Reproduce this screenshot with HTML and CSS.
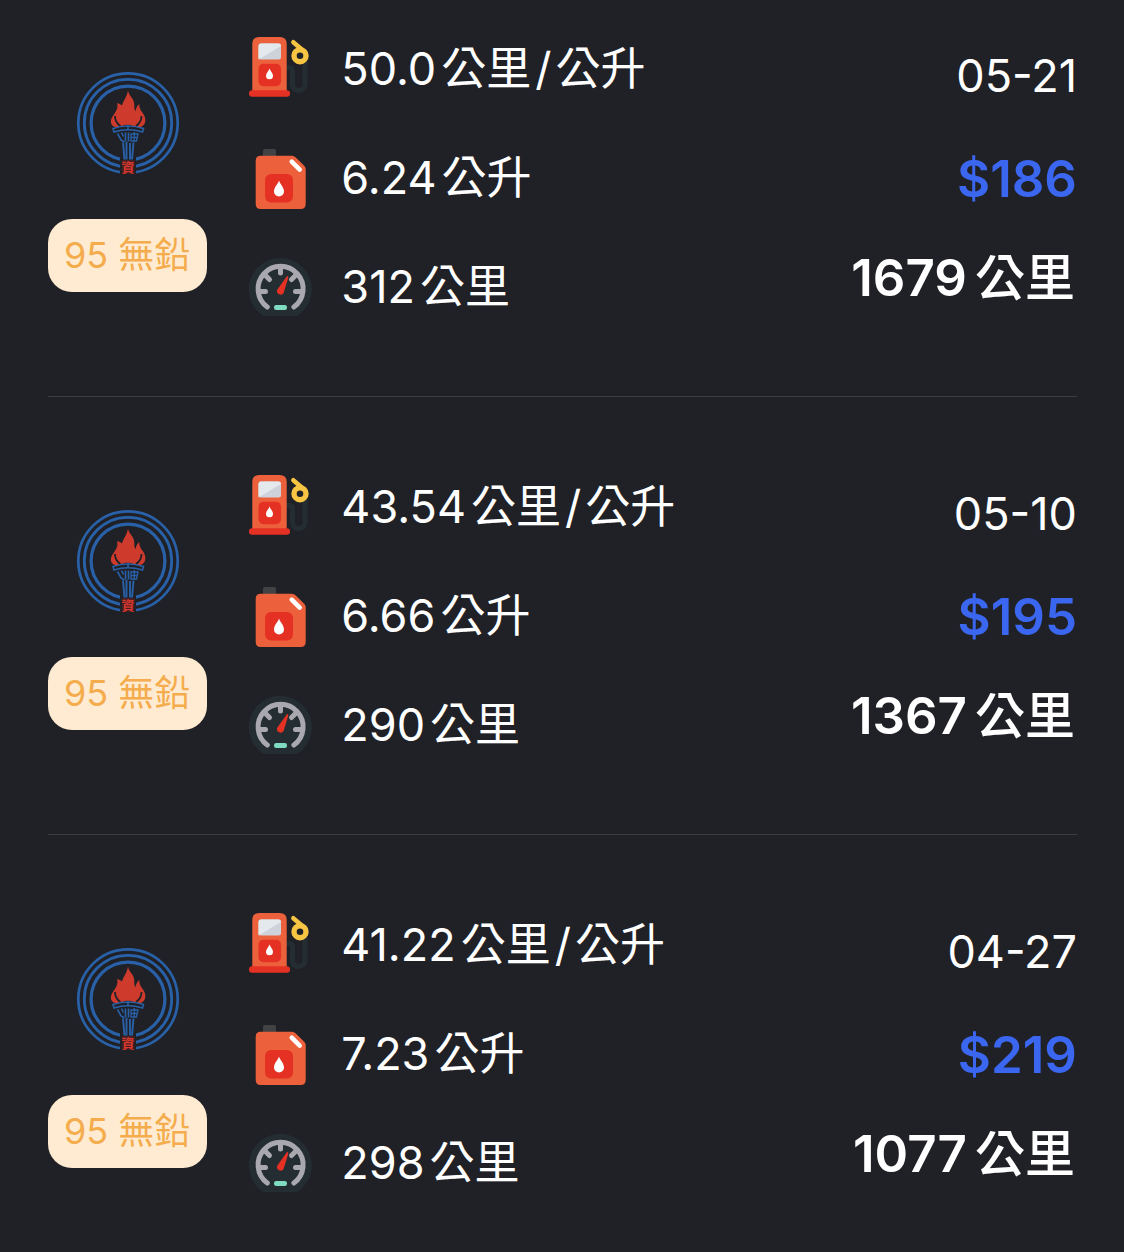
FILE: index.html
```html
<!DOCTYPE html>
<html lang="zh-Hant">
<head>
  <meta charset="UTF-8" />
  <meta name="viewport" content="width=device-width, initial-scale=1.0" />
  <title>加油紀錄</title>
  <link rel="stylesheet" href="styles.css">
</head>
<body>
  <!-- shared icons -->
  <svg class="sprite" aria-hidden="true">
    <symbol id="logo" viewBox="0 0 104 104">
      <g fill="none" stroke="#2961a8">
        <circle cx="52" cy="52" r="49.7" stroke-width="2.7" />
        <circle cx="52" cy="52" r="43.7" stroke-width="2.8" />
        <circle cx="52" cy="52" r="36.9" stroke-width="3.2" />
      </g>
      <path d="M44 84h16v20H44z" fill="#202126" />
      <path d="M52 19.500c-1 6.500-4.500 9.500-6 15-1.200-1.200-3-2-5-2.500 1.500 5-1 8.500-3.500 12-3.500 4.500-3.500 9.500.2 11.500 2.500 1 5.500.5 8-.5 3.500-1.800 8.500-1.800 12 0 2.500 1 5.500 1.500 8 .5 4-2 4.500-7 2.500-11-2-4-5.500-6.500-4.800-11.500-2.500 1.500-3.500 4.500-3.700 7-2-2-1-5-1.700-8.500-1-5-5-6.500-6-12z" fill="#ce3b2d" />
      <path d="M39 45c0 4 1.500 7.500 5.500 10M65.500 45c0 4-1.500 7.500-5.500 10" fill="none" stroke="#202126" stroke-width="1.800" />
      <g fill="none" stroke="#2961a8" stroke-width="1.600">
        <path d="M37 57.500Q52 52.500 67.500 57.500l-1 3.500Q52 56.500 38 61z" />
        <path d="M52 54v5M41.500 62.500l3.500 6.500 3.500 2M45.500 61.500l2 4M49.500 61.500V70M52.500 61.500v9" />
        <path d="M55 63h7l-1.500 7H55zM55 66.500h6.500M58.300 61v9" stroke-width="1.300" />
        <path d="M47 71.500l1.500 17M50.500 70.500v18M54 72v16.500M57.500 71.500l-1.500 17" stroke-width="1.900" />
      </g>
      <path d="M46 89h12.500v14H46z" fill="#451f22" />
    </symbol>

    <symbol id="pump" viewBox="0 0 64 64">
      <path d="M38 30.500h3q3.500 0 3.500 3.500v13c0 4 2.500 6.500 6 6.500s6.500-2.500 6.500-6.500V24" fill="none" stroke="#242e32" stroke-width="5" />
      <path d="M4.300 56V7q0-7 7-7h20.400q7 0 7 7v49z" fill="#ec603b" />
      <rect x="1" y="53.300" width="41" height="6.500" rx="3.200" fill="#e53124" />
      <rect x="10.500" y="6.500" width="22.500" height="16" rx="2.500" fill="#cdd2db" />
      <path d="M10.500 22.500V9q0-2.500 2.500-2.500h17.500q2.500 0 2.500 2.500z" fill="#e4e9ee" />
      <rect x="10.500" y="26.700" width="22.500" height="22.500" rx="5" fill="#e53124" />
      <path d="M21.500 31.500c1 3 3.500 4.500 3.500 7.300a3.500 3.500 0 0 1-7 0c0-2.800 2.500-4.300 3.500-7.300z" fill="#fff" />
      <circle cx="52" cy="18.700" r="6" fill="none" stroke="#f7c544" stroke-width="5.400" />
      <path d="M45.300 5.200l10 8.500" stroke="#f7c544" stroke-width="4.400" stroke-linecap="round" />
    </symbol>

    <symbol id="can" viewBox="0 0 64 64">
      <path d="M15 11V5q0-2 2-2h9q2 0 2 2v6z" fill="#414244" />
      <path d="M12.700 9.700H44q2 0 3.500 1.500l8.700 8.500q1.500 1.500 1.500 3.500V58q0 5-5 5h-40q-5 0-5-5V14.700q0-5 5-5z" fill="#ec603b" />
      <rect x="17" y="28" width="28" height="28.500" rx="6" fill="#e53124" />
      <path d="M31 34.500c1.200 4 5 6.500 5 11a5 5 0 0 1-10 0c0-4.500 3.800-7 5-11z" fill="#fff" />
      <path d="M43.700 15.700l8 8" stroke="#fff" stroke-width="4.500" stroke-linecap="round" />
    </symbol>

    <symbol id="gauge" viewBox="0 0 64 64">
      <path d="M15.500 61a31.500 31.500 0 1 1 33.600 0z" fill="#242e32" />
      <g fill="none" stroke="#a9a8ae" stroke-width="5" stroke-linecap="round">
        <path d="M19.300 52a22.500 22.500 0 1 1 26.600 0" />
        <path d="M32.500 12v6M11 36.500h6.500M54 36.500h-6.500M17 20l4.500 4.500M48 20l-4.500 4.500" />
      </g>
      <path d="M38.500 21.700q1.800-1.500 1.800.8l-4.600 15.300a3.600 3.600 0 0 1-6.500-3z" fill="#e53124" />
      <rect x="26" y="50" width="13" height="5" rx="2.200" fill="#7fdcc0" />
    </symbol>
  </svg>

  <ul class="records">
    <li class="record">
      <div class="station">
        <svg class="logo" viewBox="0 0 104 104"><use href="#logo" /><text x="52" y="101" text-anchor="middle">資</text></svg>
        <span class="fuel">95 無鉛</span>
      </div>
      <div class="stats">
        <div class="stat"><svg class="icon"><use href="#pump" /></svg><p>50.0<span class="unit">公里</span><span class="slash">/</span>公升</p></div>
        <div class="stat"><svg class="icon"><use href="#can" /></svg><p>6.24<span class="unit">公升</span></p></div>
        <div class="stat"><svg class="icon"><use href="#gauge" /></svg><p>312<span class="unit">公里</span></p></div>
      </div>
      <div class="summary">
        <time class="date">05-21</time>
        <p class="price">$186</p>
        <p class="total">1679<span class="unit">公里</span></p>
      </div>
    </li>
    <li class="record">
      <div class="station">
        <svg class="logo" viewBox="0 0 104 104"><use href="#logo" /><text x="52" y="101" text-anchor="middle">資</text></svg>
        <span class="fuel">95 無鉛</span>
      </div>
      <div class="stats">
        <div class="stat"><svg class="icon"><use href="#pump" /></svg><p>43.54<span class="unit">公里</span><span class="slash">/</span>公升</p></div>
        <div class="stat"><svg class="icon"><use href="#can" /></svg><p>6.66<span class="unit">公升</span></p></div>
        <div class="stat"><svg class="icon"><use href="#gauge" /></svg><p>290<span class="unit">公里</span></p></div>
      </div>
      <div class="summary">
        <time class="date">05-10</time>
        <p class="price">$195</p>
        <p class="total">1367<span class="unit">公里</span></p>
      </div>
    </li>
    <li class="record">
      <div class="station">
        <svg class="logo" viewBox="0 0 104 104"><use href="#logo" /><text x="52" y="101" text-anchor="middle">資</text></svg>
        <span class="fuel">95 無鉛</span>
      </div>
      <div class="stats">
        <div class="stat"><svg class="icon"><use href="#pump" /></svg><p>41.22<span class="unit">公里</span><span class="slash">/</span>公升</p></div>
        <div class="stat"><svg class="icon"><use href="#can" /></svg><p>7.23<span class="unit">公升</span></p></div>
        <div class="stat"><svg class="icon"><use href="#gauge" /></svg><p>298<span class="unit">公里</span></p></div>
      </div>
      <div class="summary">
        <time class="date">04-27</time>
        <p class="price">$219</p>
        <p class="total">1077<span class="unit">公里</span></p>
      </div>
    </li>
  </ul>
</body>
</html>
```

FILE: styles.css
```css
body {
  margin: 0;
  background: #202126;
  color: white;
  font-family: Inter, "Noto Sans CJK TC", sans-serif;
  font-size: 45px;
  line-height: 64px;
}
p {
  margin: 0;
}
.sprite {
  position: absolute;
  width: 0;
  height: 0;
}
.records {
  list-style: none;
  margin: 0;
  padding: 0 47px 0 48px;
}
.record {
  display: flex;
  padding: 78px 0 77px;
  border-bottom: 1px solid #3c3d42;
}
.record:first-child {
  padding-top: 37px;
}
.record:last-child {
  padding-bottom: 56px;
  border-bottom: none;
}
.station {
  display: flex;
  flex-direction: column;
  align-items: center;
  gap: 44px;
  padding-top: 34px;
}
.logo {
  width: 104px;
  height: 104px;
  overflow: visible;
}
.logo text {
  font-size: 13px;
  font-weight: bold;
  fill: #d8382e;
}
.fuel {
  padding: 4px 17px 5px 16px;
  border-radius: 24px;
  background: #feebd1;
  color: #f4ac4c;
  font-size: 36px;
}
.stats {
  flex: 1;
  display: flex;
  flex-direction: column;
  gap: 45px;
  margin-left: 41px;
}
.stat {
  display: flex;
  gap: 29px;
}
.icon {
  width: 64px;
  height: 64px;
}
.unit {
  margin-left: 5px;
}
.slash {
  margin: 0 4px;
}
.summary {
  display: flex;
  flex-direction: column;
  align-items: flex-end;
  gap: 35px;
  padding-top: 3px;
}
.date {
  line-height: 72px;
}
.price,
.total {
  font-size: 51px;
  font-weight: 600;
}
.price {
  color: #3a66f0;
}
.total {
  padding-right: 2px;
}
.total .unit {
  margin-left: 8px;
  font-size: 50px;
  font-weight: 500;
}
```
